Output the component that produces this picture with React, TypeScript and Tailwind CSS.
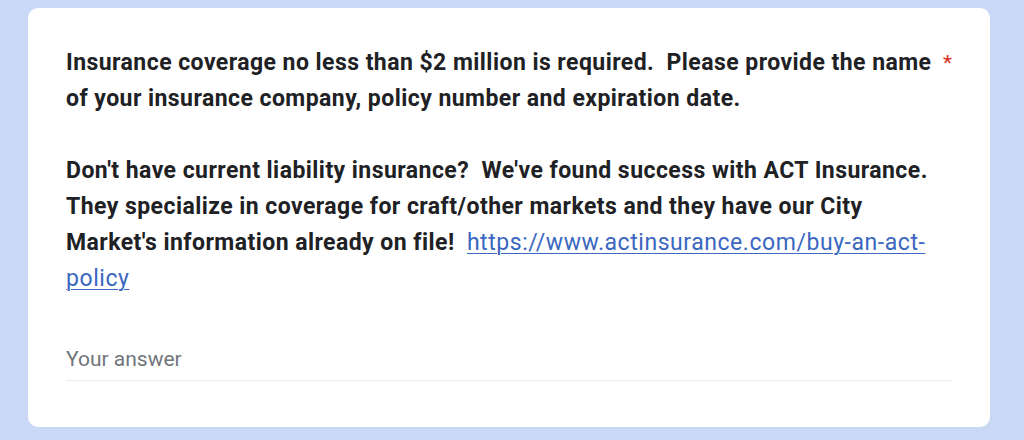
import React from "react";

export default function App() {
  return (
    <div className="w-[1024px] h-[440px] bg-[#c9d9f5] pt-[8px] pl-[28px]" style={{ fontFamily: "Roboto, 'Noto Sans', sans-serif" }}>
      <div className="w-[962px] h-[419px] bg-white rounded-[10px] pl-[38px] pt-[37px] pr-[38px]">
        <div className="flex items-start">
          <div className="w-[874px] text-[23px] leading-[36px] font-bold text-[#202124] whitespace-pre-wrap tracking-[0.45px]">
            {"Insurance coverage no less than $2 million is required.  Please provide the name of your insurance company, policy number and expiration date.\n\nDon't have current liability insurance?  We've found success with ACT Insurance. They specialize in coverage for craft/other markets and they have our City Market's information already on file!  "}
            <a href="#" className="text-[#3a67c0] underline font-normal underline-offset-[3px] decoration-1 tracking-[0.55px]">https://www.actinsurance.com/buy-an-act-policy</a>
          </div>
          <span className="ml-[6px] text-[21px] leading-[36px] text-[#d93025]">*</span>
        </div>
        <div className="mt-[49px] w-[886px] border-b border-[#e8eaed] pb-[8px] text-[21px] leading-[26px] text-[#70757a]">
          Your answer
        </div>
      </div>
    </div>
  );
}
